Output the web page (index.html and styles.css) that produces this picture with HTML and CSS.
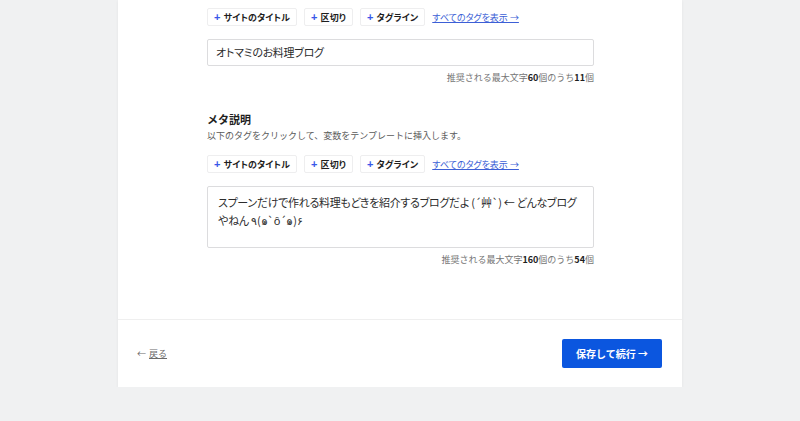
FILE: index.html
```html
<!DOCTYPE html>
<html lang="ja">
<head>
<meta charset="utf-8">
<link rel="stylesheet" href="styles.css">
</head>
<body>
<div class="page">
  <div class="card">
    <div class="body">
      <div class="tags">
        <span class="tag"><b class="plus">+</b>サイトのタイトル</span>
        <span class="tag"><b class="plus">+</b>区切り</span>
        <span class="tag"><b class="plus">+</b>タグライン</span>
        <a class="all">すべてのタグを表示 →</a>
      </div>
      <div class="input">オトマミのお料理ブログ</div>
      <div class="hint">推奨される最大文字<b>60</b>個のうち<b>11</b>個</div>

      <div class="section">
        <div class="label">メタ説明</div>
        <div class="desc">以下のタグをクリックして、変数をテンプレートに挿入します。</div>
      </div>
      <div class="tags">
        <span class="tag"><b class="plus">+</b>サイトのタイトル</span>
        <span class="tag"><b class="plus">+</b>区切り</span>
        <span class="tag"><b class="plus">+</b>タグライン</span>
        <a class="all">すべてのタグを表示 →</a>
      </div>
      <div class="textarea"><span class="line">スプーンだけで作れる料理もどきを紹介するブログだよ (´艸`) ← どんなブログ</span><span class="line">やねん ٩(๑`ȏ´๑)۶</span></div>
      <div class="hint">推奨される最大文字<b>160</b>個のうち<b>54</b>個</div>
    </div>
    <div class="footer">
      <span class="back"><span class="arrow">←</span><a class="backlink">戻る</a></span>
      <span class="save">保存して続行 →</span>
    </div>
  </div>
</div>
</body>
</html>
```
FILE: styles.css
```css
html, body {
  margin: 0;
  padding: 0;
  background: #f0f1f2;
  font-family: "Noto Sans CJK JP", "Noto Sans", sans-serif;
  color: #222;
}
.page {
  width: 564px;
  margin: 0 auto;
}
.card {
  background: #fff;
  box-shadow: 0 1px 3px rgba(0,0,0,0.06);
}
.body {
  padding: 8px 88px 53px 89px;
}
.tags {
  display: flex;
  align-items: center;
  gap: 7px;
  height: 18px;
}
.tag {
  display: inline-flex;
  align-items: center;
  height: 18px;
  padding: 0 6px;
  border: 1px solid #eeeeef;
  border-radius: 2px;
  box-sizing: border-box;
  font-size: 9px;
  font-weight: 700;
  color: #1e1e1e;
  background: #fff;
  font-feature-settings: "palt";
  letter-spacing: 0.1px;
}
.plus {
  color: #3858e9;
  font-weight: 700;
  font-size: 11px;
  margin-right: 3px;
  font-family: "Liberation Sans", sans-serif;
}
.all {
  font-size: 9px;
  color: #3c5fd6;
  text-decoration: underline;
  font-feature-settings: "palt";
}
.input {
  margin-top: 13px;
  height: 27px;
  box-sizing: border-box;
  border: 1px solid #dcdcde;
  border-radius: 2px;
  padding: 0 8px;
  font-size: 11px;
  letter-spacing: -0.3px;
  line-height: 25px;
  color: #2c2c2c;
  font-feature-settings: "palt";
}
.hint {
  margin-top: 5px;
  text-align: right;
  font-size: 9px;
  line-height: 13px;
  color: #757575;
}
.hint b {
  color: #1e1e1e;
  font-weight: 700;
}
.section {
  margin-top: 28px;
  margin-bottom: 13px;
}
.label {
  font-size: 11px;
  font-weight: 700;
  line-height: 14px;
  color: #1e1e1e;
}
.desc {
  margin-top: 3px;
  font-size: 9px;
  line-height: 13px;
  color: #5a5a5a;
}
.textarea {
  margin-top: 13px;
  height: 62px;
  box-sizing: border-box;
  border: 1px solid #dcdcde;
  border-radius: 2px;
  padding: 6px 10px;
  font-size: 11px;
  letter-spacing: -0.3px;
  line-height: 18px;
  color: #2c2c2c;
  font-feature-settings: "palt";
}
.line {
  display: block;
  white-space: nowrap;
}
.footer {
  border-top: 1px solid #efefef;
  height: 68px;
  box-sizing: border-box;
  display: flex;
  align-items: center;
  justify-content: space-between;
  padding: 0 20px 0 19px;
}
.back {
  font-size: 9px;
  color: #6a6a6a;
  display: inline-flex;
  gap: 3px;
}
.backlink {
  text-decoration: underline;
}
.save {
  display: inline-flex;
  align-items: center;
  justify-content: center;
  width: 100px;
  height: 29px;
  background: #0b56df;
  color: #fff;
  font-size: 10px;
  font-weight: 700;
  border-radius: 2px;
}
```
